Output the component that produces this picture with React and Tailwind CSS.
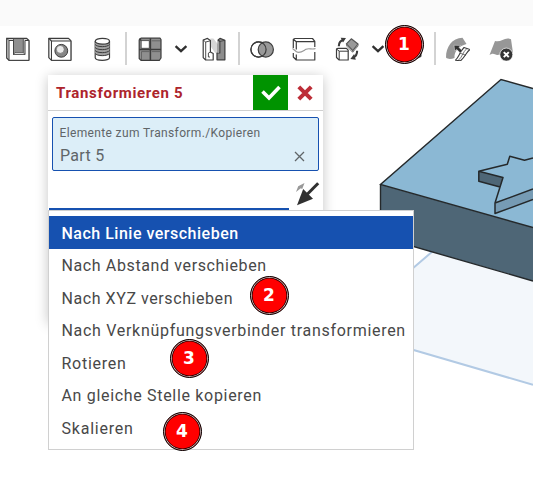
import React from "react";

const DARK = "#3c3c3c";

function Icon({ className = "", children }) {
  return (
    <svg viewBox="0 0 24 24" fill="none" stroke={DARK} strokeWidth="1.2" strokeLinejoin="round" className={`h-6 w-6 shrink-0 ${className}`}>
      {children}
    </svg>
  );
}

function Separator({ className = "" }) {
  return <div className={`h-[33px] w-[2px] shrink-0 bg-[#d3d3d3] ${className}`} />;
}

function Chevron({ className = "" }) {
  return (
    <svg viewBox="0 0 14 10" fill="none" stroke="#303030" strokeWidth="2.3" className={`h-[10px] w-[14px] shrink-0 ${className}`}>
      <path d="M1.6 2.2 L7 7.2 L12.4 2.2" />
    </svg>
  );
}

function Toolbar() {
  return (
    <div className="flex h-[46px] items-center bg-white pb-[1px] pl-[5px]">
      <Icon className="ml-[0.5px]">
        <path d="M.7 1.3H20.7L22.9 3.5V23.3H3L.7 21Z" fill="#d9d9d9" />
        <path d="M3 3.5H7.5V17.5H19V3.5H22.9V23.3H3Z" fill="#fff" strokeWidth="1" />
        <path d="M.7 1.3 3 3.5" strokeWidth=".8" />
        <path d="M7.5 1.5H17.3V17.5H7.5Z" fill="#8f8f8f" strokeWidth=".8" />
        <path d="M7.5 17.5 9 15.5H17.3L19 17.5Z" fill="#d9d9d9" strokeWidth=".6" />
      </Icon>
      <Icon className="ml-[18px]">
        <path d="M.8 1.3H20.5L22.9 3.7V23.3H3.5L.8 20.6Z" fill="#eee" />
        <path d="M.8 1.3 3.5 4" />
        <path d="M3.5 4H22.9V23.3H3.5Z" fill="#fff" strokeWidth="1" />
        <circle cx="13.3" cy="13.8" r="6.4" fill="#858585" strokeWidth="1" />
        <circle cx="12.3" cy="12.4" r="4" fill="#e9e9e9" stroke="#666" strokeWidth=".7" />
      </Icon>
      <Icon className="ml-[18px]">
        <path d="M5.2 4.2V20.8C5.2 24.1 19.5 24.1 19.5 20.8V4.2" fill="#fff" />
        <path d="M5.2 6V16.8C7 19.6 17.7 19.6 19.5 16.8V6Z" fill="#a0a0a0" stroke="none" />
        <ellipse cx="12.35" cy="4.2" rx="7.15" ry="2.9" fill="#fff" />
        <path d="M5 7.4C7 10.4 17.6 10.4 19.6 7.4M5 10.4C7 13.4 17.6 13.4 19.6 10.4M5 13.4C7 16.4 17.6 16.4 19.6 13.4M5 16.4C7 19.4 17.6 19.4 19.6 16.4" strokeWidth="1" />
      </Icon>
      <Separator className="ml-[11.5px]" />
      <Icon className="ml-[10.5px]">
        <path d="M1.2 3 3 1.2H22L23 2.5V21L21.3 23.3H3L1.2 21.5Z" fill="#8f8f8f" />
        <path d="M3.2 3.6H11.3V11.3H3.2Z" fill="#fff" strokeWidth=".8" />
        <path d="M1.5 1.5 3.2 3.6M12.4 1.2V23M1.2 12.4H23" strokeWidth="1.5" />
        <path d="M13.8 3.8H22.5M3.5 14.6H11.4M13.8 14.6H22M3.5 14.6V23" strokeWidth=".5" />
      </Icon>
      <Chevron className="ml-[12.5px]" />
      <Icon className="ml-[14px]">
        <path d="M8.4 1.4H11.4L16 7.2V18L12.5 15 8.4 9Z" fill="#d5d5d5" stroke="none" />
        <path d="M1.2 3 5.5 1.4 8.4 3.4V15L11.2 16.5V23H3.7L1.2 20.6Z" fill="#fff" />
        <path d="M1.2 3 3.7 5V23M3.7 5 8.4 3.8M8.4 15 6.4 16V20H8" strokeWidth=".9" />
        <path d="M16.1 3 18 1.4 22.9 3.3V22.8H15V16H17.8V4.5Z" fill="#8d8d8d" />
        <path d="M16.1 3V15M17.8 4.5 22.9 3.3" strokeWidth=".8" />
      </Icon>
      <Separator className="ml-[11.5px]" />
      <Icon className="ml-[10.5px]">
        <circle cx="8.5" cy="12.5" r="7.6" fill="#fff" />
        <circle cx="15.8" cy="12.5" r="7.6" fill="#999" />
        <circle cx="8.5" cy="12.5" r="7.6" />
      </Icon>
      <Icon className="ml-[18px]">
        <path d="M1.3 12V2.3L3.3 1.3H20.5L22.8 4.3V12L14 12.7 7 15.2Z" fill="#fff" stroke="none" />
        <path d="M1.3 11V2.2L3 1.5H20.5L22.8 4.3V10M1.3 16V20L4.3 23H22.8V15M1.3 2.2 4.3 4.7H22.8M4.3 4.7V12.5M4.3 17.5V23" />
        <path d="M.5 11.5 4.5 14.8C8 16.6 11 14 14 12.3 17 10.7 20 13 23.5 11.5" stroke="#999" />
      </Icon>
      <Icon className="ml-[19px]">
        <path d="M11.4 6.8 16.3 1.8 23 7 17.8 13.6Z" fill="#999" stroke="#555" />
        <path d="M11.4 6.8 11.7 9 17.6 15.3 23 9V7M17.8 13.6V15" stroke="#666" strokeWidth=".9" />
        <path d="M1.5 12 3 11.3H11.5L13.2 13.2V23H4.2L1.5 20.5Z" fill="#fff" />
        <path d="M1.5 12 4.2 14.2H13.2M4.2 14.2V23" strokeWidth="1" />
        <path d="M3.8 9.2C3.9 5.5 5.7 3.2 9 3" strokeWidth="2.1" />
        <path d="M5.7 .7 11 1.1 8 5.6Z" fill={DARK} stroke="none" />
        <path d="M22.1 13.8C22.2 17.1 20.8 19.4 18.2 20.3" strokeWidth="2.1" />
        <path d="M19.1 17.1 20.8 22.8 15.4 21.9Z" fill={DARK} stroke="none" />
      </Icon>
      <Chevron className="ml-[11.5px]" />
      <Icon className="ml-[14px]">
        <path d="M3 5H17L21.5 13.5V19L17.5 21H6Z" fill="#999" strokeWidth="2" />
      </Icon>
      <Separator className="ml-[11.5px]" />
      <Icon className="ml-[9.5px]">
        <path d="M0 20.5C0 10 6 1 16.5 .8L20.5 7C13 9 8 14 8.5 21 5.5 22 2 22.5 0 20.5Z" fill="#979797" stroke="none" />
        <path d="M9.5 23.2C13 20 14 14.5 18 10.5L24 12.5C20.5 14.5 19 20.5 14.5 23.8Z" fill="#fff" strokeWidth="1.1" />
        <path d="M13.5 16 20 18.3M12.2 23.4C16.5 20 16.7 15 20.8 11.6" strokeWidth=".7" />
        <path d="M8 8.3 14.5 8.5 12.8 10.3 16.4 13.7 14.2 15.9 10.6 12.3 8.8 14Z" fill="#303030" stroke="#fff" strokeWidth=".4" />
      </Icon>
      <Icon className="ml-[19px]">
        <path d="M.5 18 6 4C12 6 16 -1 22 2.3L24 16C18 13 10 20 6 17.3 4 16 2 17 .5 18Z" fill="#979797" stroke="none" />
        <circle cx="17.3" cy="17.6" r="6.5" fill="#343434" stroke="#fff" strokeWidth=".7" />
        <path d="M14.8 15.1 19.8 20.1M19.8 15.1 14.8 20.1" stroke="#fff" strokeWidth="2" />
      </Icon>
    </div>
  );
}

function Scene() {
  return (
    <svg viewBox="0 0 533 477" className="absolute left-0 top-0 h-[477px] w-[533px]">
      <path d="M405 275 433 251 533 278V384.8L405 347.5Z" fill="#f3f7fb" />
      <path d="M433 251 405 275M405 347.5 533 384.8" stroke="#b2cae4" strokeWidth="2" fill="none" />
      <path d="M380.5 184.5 533 227.5V281L380.5 237Z" fill="#4e6676" />
      <path d="M380.5 184.5 501 79.5 533 88.5V227.5Z" fill="#8bb8d4" />
      <path d="M533 88.5 501 79.5 380.5 184.5 533 227.5M380.5 184.5V237L533 281" fill="none" stroke="#25292b" strokeWidth="1.4" />
      <path d="M478.8 171.3 503 177.6 500 187 478.8 181.2Z" fill="#4e6676" />
      <path d="M495 203 533 189V199.5L495 213.5Z" fill="#769bb4" />
      <path d="M533 158 524.5 160.3 509.8 156.3 507.3 164.3 478.8 171.3 503 177.6 495 203 533 189M478.8 171.3V181.2L500 187M495 203V213.5L533 199.5" fill="none" stroke="#25292b" strokeWidth="1.5" strokeLinejoin="round" />
    </svg>
  );
}

function FeaturePanel() {
  return (
    <section className="ml-[48px] mt-[3px] h-[247px] w-[275px] bg-white shadow-[0_2px_12px_rgba(0,0,0,0.23)]">
      <header className="flex h-[36px] items-center border-b border-[#d0d0d0]">
        <h1 className="ml-2 w-[197px] whitespace-nowrap pt-[2px] font-['Roboto',sans-serif] text-[15px] font-bold tracking-[0.66px] text-[#ad242c]">Transformieren 5</h1>
        <button aria-label="OK" className="flex h-[35px] w-[35px] items-center justify-center bg-[#009300]">
          <svg viewBox="0 0 20 16" className="h-4 w-5" fill="none" stroke="#fff" strokeWidth="3.6"><path d="M1.5 6.5 8 13 18.5 2" /></svg>
        </button>
        <button aria-label="Abbrechen" className="flex h-[35px] w-[34px] items-center justify-center">
          <svg viewBox="0 0 16 16" className="h-4 w-4" fill="none" stroke="#bd2e38" strokeWidth="4"><path d="M1.8 1.8 14.2 14.2M14.2 1.8 1.8 14.2" /></svg>
        </button>
      </header>
      <div className="mx-[4px] mt-[6px] h-[54px] rounded-[2px] border border-[#1651b0] bg-[#dceef8] px-[7px] pt-[7px] font-['Roboto',sans-serif] text-[#606568]">
        <div className="-ml-[0.5px] whitespace-nowrap text-[12px] leading-[17px] tracking-[0.36px]">Elemente zum Transform./Kopieren</div>
        <div className="flex items-center justify-between pr-[6px] pt-[2px] text-[16px] leading-[24px] tracking-[0.3px]">
          <span>Part 5</span>
          <svg viewBox="0 0 11 11" className="h-[11px] w-[11px]" fill="none" stroke="#606568" strokeWidth="1.3"><path d="M1 1 10 10M10 1 1 10" /></svg>
        </div>
      </div>
      <div className="flex h-[39px] pl-[1px]">
        <div className="h-full w-[240px] border-b-2 border-[#1651b0]" />
        <svg viewBox="0 0 26 26" className="ml-[5px] mt-[9px] h-[26px] w-[26px]">
          <path d="M2 12 4.2 6.2 10.5 3 8.2 9 6.8 8.2Z" fill="#999" />
          <path d="M24.2 3.2 12.5 15" stroke="#303030" strokeWidth="3" />
          <path d="M3 25.2 9.2 9 19 18.8Z" fill="#303030" />
        </svg>
      </div>
    </section>
  );
}

const options = [
  { label: "Nach Abstand verschieben", cls: "tracking-[0.62px]" },
  { label: "Nach XYZ verschieben", cls: "tracking-[0.57px]" },
  { label: "Nach Verknüpfungsverbinder transformieren", cls: "tracking-[0.7px]" },
  { label: "Rotieren", cls: "tracking-[0.72px]" },
  { label: "An gleiche Stelle kopieren", cls: "tracking-[0.68px]" },
  { label: "Skalieren", cls: "tracking-[0.78px]" },
];

function OptionMenu() {
  return (
    <ul className="absolute left-[48px] top-[210px] h-[240px] w-[366px] border border-[#d0d0d0] bg-white pt-[5px] font-['Roboto',sans-serif] text-[16px] text-[#484848]">
      <li className="flex h-[33px] items-center whitespace-nowrap bg-[#1651b0] pl-[12.5px] pt-[2px] font-medium tracking-[0.5px] text-white">Nach Linie verschieben</li>
      {options.map((o) => (
        <li key={o.label} className={`flex h-[32.5px] items-center whitespace-nowrap pl-[12.5px] pt-[2px] ${o.cls}`}>{o.label}</li>
      ))}
    </ul>
  );
}

function Badge({ n, className }) {
  return (
    <div className={`absolute flex h-[39px] w-[39px] items-center justify-center rounded-full border border-black bg-[#f00] pt-px font-['DejaVu_Sans',sans-serif] text-[17px] font-bold leading-none text-white shadow-[inset_0_0_0_0.7px_#ddd,inset_0_0_0_1.6px_#300] ${className}`}>
      {n}
    </div>
  );
}

export default function App() {
  return (
    <main className="relative h-[477px] w-[533px] overflow-hidden bg-white">
      <Scene />
      <div className="relative">
        <div className="h-[26px] bg-[#fafafa]" />
        <Toolbar />
        <FeaturePanel />
      </div>
      <OptionMenu />
      <Badge n="1" className="left-[384.5px] top-[24.5px]" />
      <Badge n="2" className="left-[249.5px] top-[275.5px]" />
      <Badge n="3" className="left-[169.5px] top-[338.5px]" />
      <Badge n="4" className="left-[162.5px] top-[411.5px]" />
    </main>
  );
}
